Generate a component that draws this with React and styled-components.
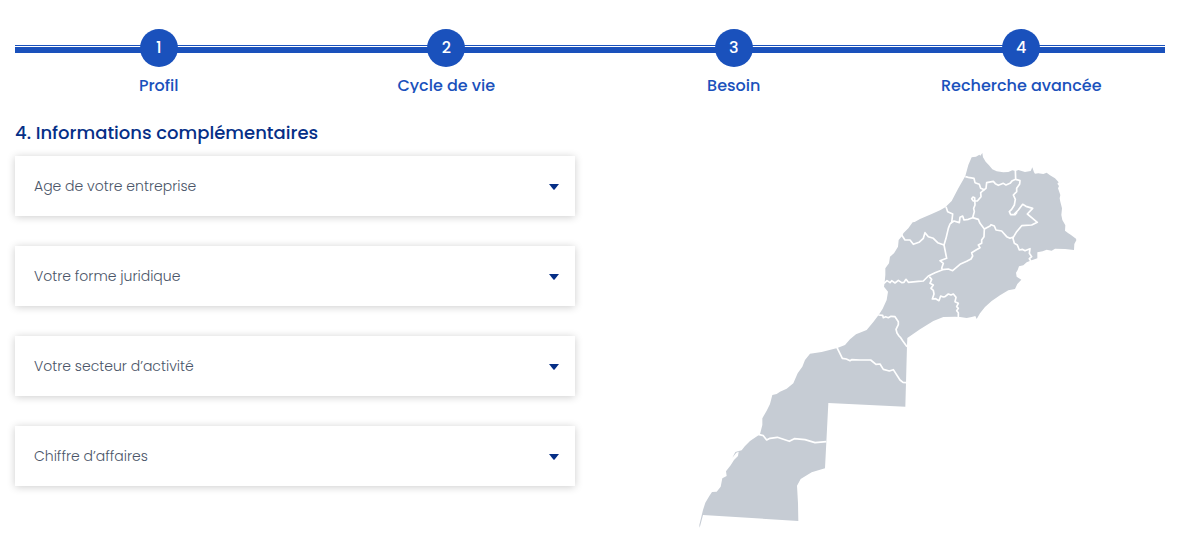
import React from 'react'
import styled, { createGlobalStyle, ThemeProvider } from 'styled-components'

const theme = {
  font: 'Poppins, Inter, "Open Sans", sans-serif',
  color: {
    primary: '#1a51bc',
    navy: '#062f87',
    text: '#4a5568',
    map: '#c6ccd4',
    white: '#ffffff',
  },
}

const GlobalStyle = createGlobalStyle`
  *, *::before, *::after {
    box-sizing: border-box;
  }
  body {
    margin: 0;
    background-color: #ffffff;
    font-family: ${ ({ theme }) => theme.font };
  }
`

const Page = styled.main`
  padding: 29px 15px 16px;
`

// the rail behind the circles: a thin line over a thick one
const Steps = styled.ol(({ theme }) => `
  display: grid;
  grid-template-columns: repeat(4, 1fr);
  margin: 0;
  padding: 0;
  list-style: none;
  background:
    linear-gradient(${ theme.color.primary }, ${ theme.color.primary }) 0 16px / 100% 1px no-repeat,
    linear-gradient(${ theme.color.primary }, ${ theme.color.primary }) 0 18px / 100% 6px no-repeat;
`)

const Step = styled.li`
  display: flex;
  flex-direction: column;
  align-items: center;
`

const StepNumber = styled.span(({ theme }) => `
  display: flex;
  align-items: center;
  justify-content: center;
  width: 38px;
  height: 38px;
  padding-bottom: 2px;
  border-radius: 50%;
  background-color: ${ theme.color.primary };
  color: ${ theme.color.white };
  font-size: 16px;
  font-weight: 500;
`)

const StepLabel = styled.span(({ theme }) => `
  height: 16px;
  margin-top: 10px;
  overflow: hidden;
  color: ${ theme.color.primary };
  font-size: 16px;
  font-weight: 500;
  line-height: 18px;
`)

const Columns = styled.div`
  display: grid;
  grid-template-columns: 1fr 1fr;
  gap: 30px;
  margin-top: 28px;
`

const Title = styled.h2(({ theme }) => `
  margin: 0 0 11px;
  color: ${ theme.color.navy };
  font-size: 18px;
  font-weight: 500;
  line-height: 24px;
`)

const Fields = styled.form`
  display: flex;
  flex-direction: column;
  gap: 30px;
`

const Field = styled.div`
  display: grid;
  align-items: center;
  background-color: #ffffff;
  box-shadow: 0 1px 8px rgba(0, 0, 0, 0.2);
  & > * {
    grid-area: 1 / 1;
  }
`

const Select = styled.select(({ theme }) => `
  appearance: none;
  width: 100%;
  height: 60px;
  padding: 0 40px 0 19px;
  border: 0;
  border-radius: 0;
  background: transparent;
  color: ${ theme.color.text };
  font-family: inherit;
  font-size: 14px;
  font-weight: 300;
  cursor: pointer;
`)

const Caret = styled.svg`
  justify-self: end;
  width: 10px;
  height: 6px;
  margin-top: 2px;
  margin-right: 16px;
  fill: ${ ({ theme }) => theme.color.navy };
  pointer-events: none;
`

const MapSvg = styled.svg`
  display: block;
  width: 100%;
  margin-top: 29px;
`

const Country = styled.path`
  fill: ${ ({ theme }) => theme.color.map };
`

const Border = styled.path`
  fill: none;
  stroke: #ffffff;
  stroke-width: 5;
  stroke-linejoin: round;
`

const steps = ['Profil', 'Cycle de vie', 'Besoin', 'Recherche avancée']

const fields = [
  { name: 'age', label: 'Age de votre entreprise' },
  { name: 'forme', label: 'Votre forme juridique' },
  { name: 'secteur', label: 'Votre secteur d’activité' },
  { name: 'chiffre', label: 'Chiffre d’affaires' },
]

const outline = `M1100 22L1113 20 1123 14 1126 17 1132 9 1134 22 1142 35 1152 46 1162 58 1175 64 1195 67 1210 66
  1222 61 1232 63 1240 60 1260 66 1277 63 1282 52 1287 67 1290 71 1300 70 1315 72 1325 68 1335 76 1350 85 1361 97
  1357 101 1362 108 1359 115 1366 135 1364 145 1366 155 1371 175 1369 195 1372 210 1381 226 1380 242 1390 250 1397 254
  1413 266 1414 271 1408 282 1407 300 1380 297 1350 296 1340 302 1325 299 1313 304 1297 307 1297 325 1280 331
  1265 337 1255 346 1242 349 1238 360 1233 368 1235 380 1249 389 1237 402 1230 417 1210 421 1185 436 1160 453
  1140 471 1125 490 1115 507 1111 498 1100 501 1085 504 1065 501 1050 500 1015 501 985 513 945 538 907 564
  906 587 901 770 670 759 664 877 660 955 620 967 587 987 576 1007 579 1060 580 1113 294 1095 284 1133 283 1125
  294 1080 301 1058 313 1038 321 1026 335 1025 347 1010 352 985 365 978 363 964 377 946 387 930 399 918 401 905
  394 908 382 923 391 906 410 901 420 888 435 873 465 853 472 825 472 805 485 782 495 762 502 735 515 732 525 725
  545 716 565 700 578 670 592 650 600 630 615 611 650 606 697 594 720 585 735 568 753 553 785 540 805 516 823 492
  833 476 845 450 849 425 837 410 839 397 841 375 841 355 852 340 855 320 867 310 879 290 881 270 892 257 895 250
  910 235 923 217 929 216 945 207 980 192 1005 181 1021 172 1040 153 1060 115 1081 78 1090 45Z`

const borders = [
  'M1081 80L1090 82 1107 85 1110 98 1123 103 1127 115 1138 119 1143 115 1145 98 1165 94 1171 101 1180 106 1195 100 1203 105 1215 100 1222 92 1232 88 1231 60',
  'M1232 88L1245 92 1244 102 1235 115 1235 125 1225 135 1231 148 1228 165 1220 178 1213 185 1217 194 1230 194 1235 188 1228 192 1240 180 1253 163 1263 169 1283 175 1267 192 1280 203 1297 217 1280 225 1250 227 1235 245 1223 265',
  'M1138 119L1127 128 1128 140 1117 153 1105 153 1100 146 1104 141 1109 143 1110 165 1106 175 1108 185 1103 203 1090 208 1077 210 1073 198 1065 202 1063 218 1047 213 1040 218 1043 192 1028 185 1023 170',
  'M1040 217L1035 222 1030 235 1023 265 1017 285 1021 305 1025 325 1005 332 1015 340 1010 355 1013 359',
  'M1103 203L1120 208 1125 220 1138 237 1137 260 1130 270 1130 280 1120 285 1125 293 1113 300 1100 308 1103 318 1098 327 1085 334 1065 343 1043 362 1030 357 1013 359 990 368 970 378 955 393 940 394 910 397 903 388 897 397 890 398 880 391 870 399 860 392 855 398 846 392 837 400',
  'M1138 237L1155 228 1158 224 1168 228 1173 240 1190 243 1205 260 1215 265 1223 262 1228 280 1237 285 1243 300 1252 298 1260 302 1275 296 1273 310 1280 320 1273 326 1279 335',
  'M890 255L900 270 915 270 925 283 942 277 955 265 960 248 970 260 985 265 998 278 1017 285',
  'M973 380L980 388 975 400 985 405 978 415 985 421 987 432 982 447 992 446 1002 452 1007 438 1015 441 1020 440 1030 432 1038 435 1045 432 1053 442 1050 455 1060 460 1055 470 1060 475 1055 482 1060 488 1060 503',
  'M820 495L833 496 835 503 842 500 850 503 858 499 870 500 880 515 880 524 873 538 876 549 882 558 887 563 893 572 906 590',
  'M696 593L712 625 724 627 735 632 740 629 765 630 797 630 813 643 825 642 835 658 853 663 865 659 885 690 894 697 904 698',
  'M460 853L475 857 485 870 495 865 517 862 553 874 568 866 600 869 630 878 664 875',
]

const RegionMap = () => (
  <MapSvg viewBox="0 0 1680 1140" role="img" aria-label="Carte des régions">
    <Country d={ outline } />
    { borders.map(d => <Border key={ d } d={ d } />) }
  </MapSvg>
)

const SelectField = ({ name, label }) => (
  <Field>
    <Select name={ name } aria-label={ label } defaultValue="">
      <option value="">{ label }</option>
    </Select>
    <Caret viewBox="0 0 10 6" aria-hidden="true">
      <path d="M0 0h10L5.6 5.4q-.6.6-1.2 0Z" />
    </Caret>
  </Field>
)

const App = () => (
  <ThemeProvider theme={ theme }>
    <GlobalStyle />
    <Page>
      <Steps>
        {
          steps.map((step, i) => (
            <Step key={ step }>
              <StepNumber>{ i + 1 }</StepNumber>
              <StepLabel>{ step }</StepLabel>
            </Step>
          ))
        }
      </Steps>
      <Columns>
        <section>
          <Title>4. Informations complémentaires</Title>
          <Fields>
            { fields.map(field => <SelectField key={ field.name } { ...field } />) }
          </Fields>
        </section>
        <RegionMap />
      </Columns>
    </Page>
  </ThemeProvider>
)

export default App
